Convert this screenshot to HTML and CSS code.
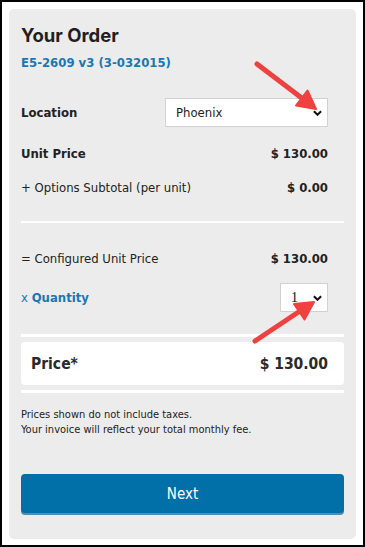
FILE: index.html
```html
<!DOCTYPE html>
<html lang="en">

<head>
  <meta charset="UTF-8">
  <meta name="viewport" content="width=device-width, initial-scale=1.0">
  <title>Your Order</title>
  <link rel="stylesheet" href="styles.css">
</head>

<body>
  <div class="frame">
    <div class="order-card">
      <h1>Your Order</h1>
      <div class="product">E5-2609 v3 (3-032015)</div>

      <div class="row location-row">
        <span class="label strong">Location</span>
        <div class="select-wrap location-select">
          <select>
            <option>Phoenix</option>
          </select>
          <svg class="chevron" viewBox="0 0 10 6"><path d="M1 1 L5 5 L9 1" /></svg>
        </div>
      </div>

      <div class="row">
        <span class="label strong">Unit Price</span>
        <span class="value">$ 130.00</span>
      </div>
      <div class="row">
        <span class="label">+ Options Subtotal (per unit)</span>
        <span class="value">$ 0.00</span>
      </div>

      <div class="divider first"></div>

      <div class="row">
        <span class="label">= Configured Unit Price</span>
        <span class="value">$ 130.00</span>
      </div>
      <div class="row quantity-row">
        <span class="label blue">x <b>Quantity</b></span>
        <div class="select-wrap qty-select">
          <select>
            <option>1</option>
          </select>
          <svg class="chevron" viewBox="0 0 10 6"><path d="M1 1 L5 5 L9 1" /></svg>
        </div>
      </div>

      <div class="divider thick"></div>
      <div class="price-box">
        <span>Price*</span>
        <span>$ 130.00</span>
      </div>
      <div class="divider thick"></div>

      <p class="note">Prices shown do not include taxes.<br>Your invoice will reflect your total monthly fee.</p>

      <button class="next-btn">Next</button>
    </div>

    <!-- rote Hinweispfeile aus dem Screenshot -->
    <svg class="arrows" viewBox="0 0 365 547">
      <line x1="257" y1="64" x2="303" y2="99" />
      <polygon points="316,109 296,105.5 307.5,90.5" />
      <line x1="255" y1="341" x2="300" y2="311" />
      <polygon points="314,302 304.5,319.5 294,304" />
    </svg>
  </div>
</body>

</html>
```

FILE: styles.css
```css
/* Bestellübersicht */
* {
  box-sizing: border-box;
}

body {
  margin: 0;
  font-family: "DejaVu Sans Condensed", "DejaVu Sans", sans-serif;
  color: #222;
}

.frame {
  position: relative;
  width: 365px;
  height: 547px;
  border: 2px solid #000;
  background: #fff;
  padding: 7px 7px 0 7px;
}

.order-card {
  background: #ececec;
  border-radius: 5px;
  height: 530px;
  padding: 14px 12px 0 12px;
  display: flex;
  flex-direction: column;
}

h1 {
  font-family: Inter, "Open Sans", sans-serif;
  font-weight: 700;
  font-size: 18.5px;
  margin: 0;
  line-height: 24px;
  color: #1f1f1f;
}

.product {
  margin-top: 8px;
  font-size: 13px;
  font-weight: bold;
  color: #1a77b2;
  line-height: 16px;
}

.row {
  display: flex;
  justify-content: space-between;
  align-items: center;
  padding-right: 16px;
  font-size: 13px;
  height: 34px;
}

.location-row {
  margin-top: 27px;
  height: 29px;
  margin-bottom: 9px;
}

.strong {
  font-weight: bold;
}

.value {
  font-weight: bold;
}

.blue {
  color: #1a77b2;
}

.select-wrap {
  position: relative;
  height: 29px;
}

.select-wrap select {
  appearance: none;
  -webkit-appearance: none;
  height: 29px;
  border: 1px solid #d2d2d2;
  background: #fff;
  border-radius: 0;
  font-family: "DejaVu Sans Condensed", "DejaVu Sans", sans-serif;
  font-size: 13px;
  color: #222;
  padding: 0 0 0 10px;
  outline: none;
}

.location-select select {
  width: 163px;
}

.qty-select select {
  width: 48px;
  font-family: "Liberation Serif", serif;
  font-size: 14px;
  color: #111;
}

.chevron {
  position: absolute;
  right: 6px;
  top: 12px;
  width: 9px;
  height: 6px;
  fill: none;
  stroke: #111;
  stroke-width: 2.2;
}

.divider {
  background: #fff;
  height: 2px;
}

.divider.first {
  margin: 17px 0 18px;
}

.divider.thick {
  height: 3px;
}

.quantity-row {
  margin-top: 8px;
  height: 29px;
}

.quantity-row + .divider {
  margin-top: 22px;
}

.price-box {
  margin: 5px 0 5px;
  background: #fff;
  border-radius: 4px;
  height: 43px;
  display: flex;
  justify-content: space-between;
  align-items: center;
  padding: 0 16px 0 10px;
  font-size: 15.5px;
  font-weight: bold;
  color: #2a2a2a;
}

.note {
  margin: 14px 0 0;
  font-size: 11px;
  line-height: 15px;
  color: #222;
}

.next-btn {
  margin-top: 37px;
  height: 39px;
  border: none;
  border-radius: 4px;
  background: #0270a8;
  box-shadow: 0 2px 0 #4a8fb5;
  color: #fff;
  font-family: "DejaVu Sans Condensed", "DejaVu Sans", sans-serif;
  font-size: 15px;
  font-weight: 500;
}

.arrows {
  position: absolute;
  left: -2px;
  top: -2px;
  width: 365px;
  height: 547px;
  pointer-events: none;
}

.arrows line {
  stroke: #ef4240;
  stroke-width: 5;
  stroke-linecap: round;
}

.arrows polygon {
  fill: #ef4240;
  stroke: #ef4240;
  stroke-width: 2;
  stroke-linejoin: round;
}
```
